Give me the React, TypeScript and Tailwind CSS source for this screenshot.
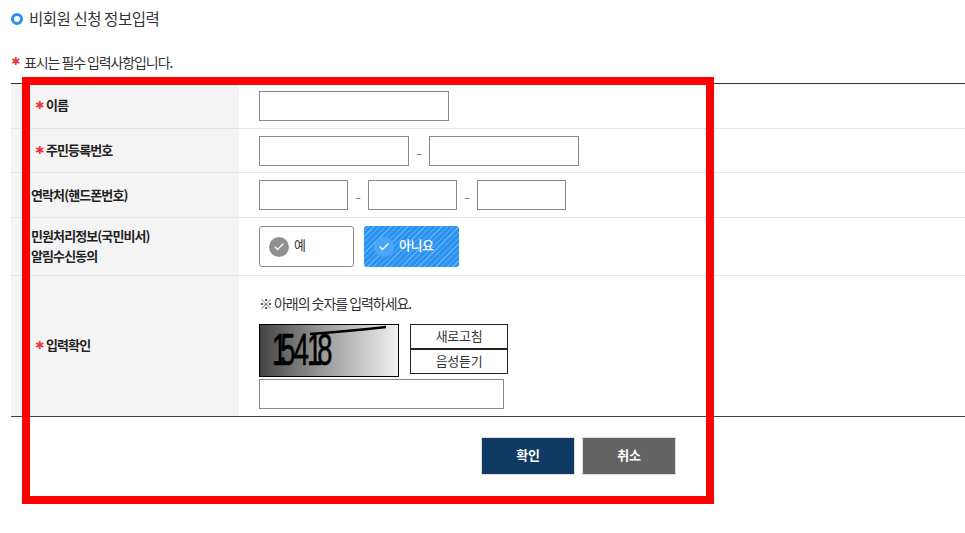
import { Check } from "lucide-react";
import type { ReactNode } from "react";

function Star() {
  return <span className="inline-block relative -top-[1px] w-[8px] mr-[3px] font-['DejaVu_Sans',sans-serif] text-[#e8383d] font-normal text-[11px] leading-none">✱</span>;
}

function Row({ label, height, children, last }: { label: ReactNode; height: string; children: ReactNode; last?: boolean }) {
  return (
    <div className={`flex ${height} ${last ? "" : "border-b border-[#e5e5e5]"}`}>
      <div className="w-[228px] shrink-0 bg-[#f4f4f4] pl-5 flex items-center text-[13px] font-bold text-[#222] tracking-[-0.9px] leading-[20px]">
        <div>{label}</div>
      </div>
      <div className="flex-1 pl-5 flex items-center">{children}</div>
    </div>
  );
}

function Field({ w }: { w: string }) {
  return <input type="text" className={`${w} h-[30px] border border-[#8a8a8a] bg-white`} />;
}

function Dash() {
  return <span className="w-[20px] text-center text-[18px] font-light leading-[18px] text-[#777]">-</span>;
}

export default function App() {
  return (
    <div className="relative w-[965px] h-[533px] bg-white overflow-hidden font-['Noto_Sans_CJK_KR','Noto_Sans',sans-serif] text-[#333]">
      <div className="pl-[11px] pt-[6px]">
        <h2 className="flex items-center h-[26px] text-[15.5px] font-normal text-[#333] tracking-[-0.45px]">
          <span className="w-[12px] h-[12px] rounded-full border-[3px] border-[#2a8ff0] mr-[6px]" />
          비회원 신청 정보입력
        </h2>
        <p className="mt-[19px] h-[22px] flex items-center gap-[2px] text-[14px] tracking-[-1.1px] text-[#333]">
          <Star />
          표시는 필수 입력사항입니다.
        </p>
        <div className="mt-[10px] border-t border-b border-t-[#333] border-b-[#444]">
          <Row height="h-[45px]" label={<span className="pl-[4px] relative -top-px"><Star />이름</span>}>
            <Field w="w-[190px]" />
          </Row>
          <Row height="h-[44px]" label={<span className="pl-[4px] relative -top-px"><Star />주민등록번호</span>}>
            <Field w="w-[150px]" />
            <Dash />
            <Field w="w-[150px]" />
          </Row>
          <Row height="h-[45px]" label="연락처(핸드폰번호)">
            <Field w="w-[89px]" />
            <Dash />
            <Field w="w-[89px]" />
            <Dash />
            <Field w="w-[89px]" />
          </Row>
          <Row height="h-[58px]" label={<span className="block relative -top-px">민원처리정보(국민비서)<br />알림수신동의</span>}>
            <div className="flex gap-[10px]">
              <div className="w-[95px] h-[41px] border border-[#8a8a8a] rounded-[3px] flex items-center pl-[9px] text-[13px] text-[#333]">
                <span className="w-[20px] h-[20px] rounded-full bg-[#909090] flex items-center justify-center mr-[5px]">
                  <Check size={12} strokeWidth={2.5} className="text-white" />
                </span>
                <span className="-mt-[3px]">예</span>
              </div>
              <div className="w-[95px] h-[41px] rounded-[3px] flex items-center pl-[10px] text-[13px] font-medium tracking-[-0.4px] text-white bg-[#2b93f0] bg-[repeating-linear-gradient(135deg,#2b93f0_0px,#2b93f0_3px,#62b0f5_3px,#62b0f5_4px)]">
                <span className="w-[20px] h-[20px] rounded-full bg-[#4ba6f5] flex items-center justify-center mr-[5px]">
                  <Check size={12} strokeWidth={2.5} className="text-white" />
                </span>
                <span className="-mt-[3px]">아니요</span>
              </div>
            </div>
          </Row>
          <Row height="h-[140px]" last label={<span className="pl-[4px] relative -top-px"><Star />입력확인</span>}>
            <div className="flex flex-col pt-[10px]">
              <p className="relative -top-px text-[14px] tracking-[-1.05px] text-[#333] h-[20px] leading-[20px]">※ 아래의 숫자를 입력하세요.</p>
              <div className="flex mt-[10px]">
                <div className="relative w-[140px] h-[53px] border border-black bg-[linear-gradient(90deg,#444_0%,#999_45%,#f0f0f0_100%)] overflow-hidden">
                  <span className="absolute left-[12px] top-[2px] font-['Liberation_Sans',sans-serif] text-[44px] leading-[46px] text-black scale-x-[0.62] origin-left [-webkit-text-stroke:0.6px_black] whitespace-nowrap">
                    <span className="tracking-[-11px]">1</span>
                    <span className="tracking-[-3px]">54</span>
                    <span className="tracking-[-8px]">1</span>
                    <span>8</span>
                  </span>
                  <svg className="absolute inset-0" width="140" height="53" viewBox="0 0 140 53">
                    <path d="M50 9 Q90 6 126 2" stroke="#000" strokeWidth="2.5" fill="none" />
                  </svg>
                </div>
                <div className="ml-[11px] flex flex-col">
                  <div className="w-[98px] h-[25px] border border-[#222] flex items-center justify-center text-[13px] tracking-[-0.3px] text-[#333]">새로고침</div>
                  <div className="w-[98px] h-[25px] border border-[#222] flex items-center justify-center text-[13px] tracking-[-0.3px] text-[#333]">음성듣기</div>
                </div>
              </div>
              <input type="text" className="mt-[2px] w-[245px] h-[30px] border border-[#8a8a8a] bg-white" />
            </div>
          </Row>
        </div>
        <div className="flex gap-[7px] mt-[20px] pl-[470px]">
          <button className="w-[94px] h-[38px] pb-[2px] bg-[#0f3a63] border border-[#ddd] text-white text-[13px] font-bold tracking-[-0.3px]">확인</button>
          <button className="w-[94px] h-[38px] pb-[2px] bg-[#636363] border border-[#ddd] text-white text-[13px] font-bold tracking-[-0.3px]">취소</button>
        </div>
      </div>
      <div className="absolute left-[22px] top-[77px] w-[692px] h-[427px] border-[8px] border-[#ff0000] pointer-events-none" />
    </div>
  );
}
